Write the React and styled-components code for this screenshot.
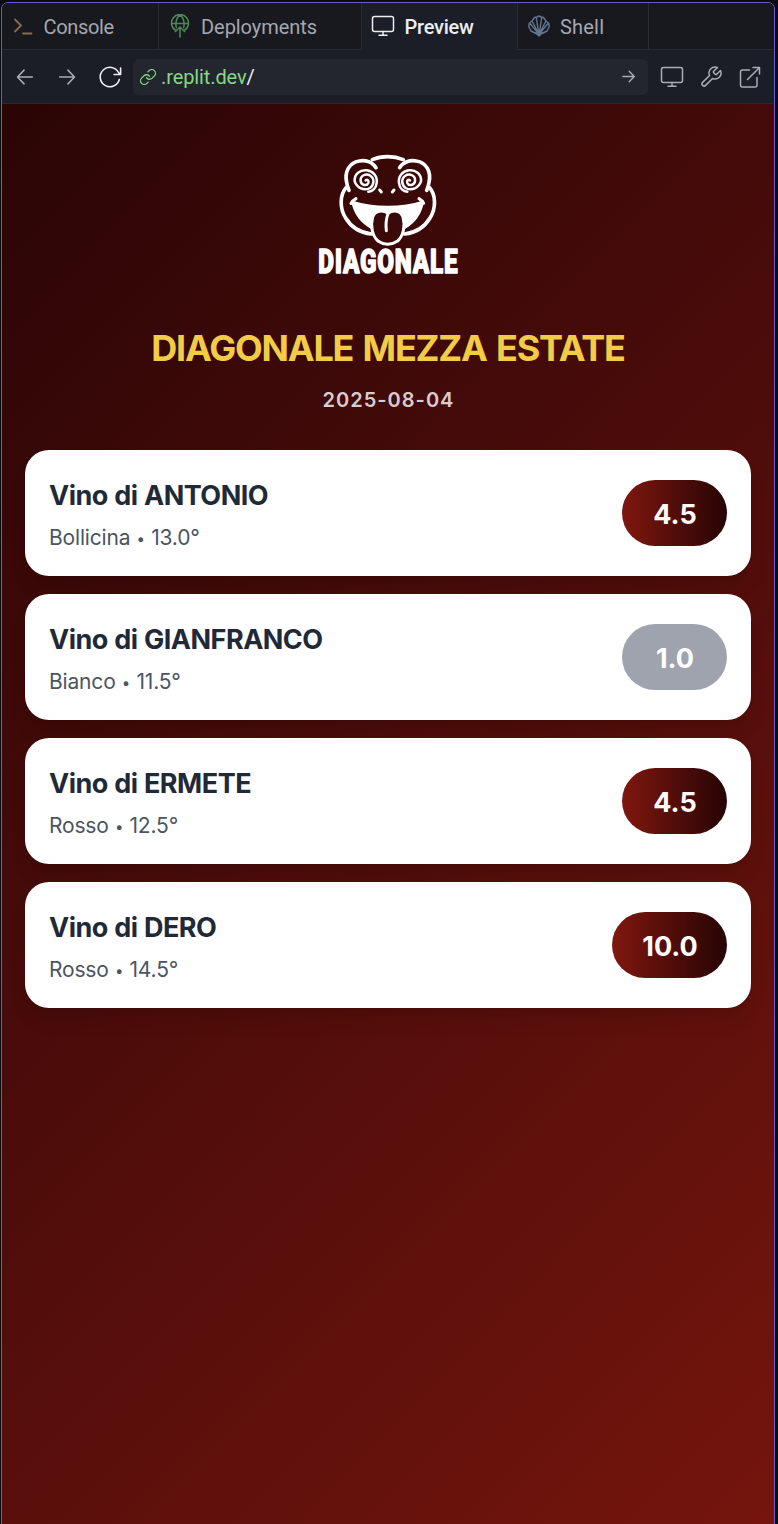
import React from "react";
import styled, { createGlobalStyle } from "styled-components";

const GlobalStyle = createGlobalStyle`
  *, *::before, *::after { box-sizing: border-box; }
  html, body { margin: 0; padding: 0; background: #0b0c12; }
  body { font-family: Inter, "Liberation Sans", sans-serif; }
`;

const Page = styled.div`
  height: 1524px;
  padding: 2px 3px 0 1px;
  overflow: hidden;
  background: #0b0c12;
`;

const Pane = styled.div`
  display: flex;
  flex-direction: column;
  height: 1540px;
  border: 1px solid #6a58d6;
  border-radius: 7px;
  overflow: hidden;
  background: #1b1d25;
`;

const TabBar = styled.div`
  display: flex;
  height: 47px;
  flex: none;
`;

const Tab = styled.div`
  display: flex;
  align-items: center;
  width: ${(p) => p.$width}px;
  padding-left: ${(p) => p.$inset}px;
  gap: ${(p) => p.$gap}px;
  border-right: 1px solid #292b34;
  border-bottom: 1px solid ${(p) => (p.$active ? "#1b1e26" : "#292b34")};
  background: ${(p) => (p.$active ? "#1b1e26" : "#18181f")};
  color: ${(p) => (p.$active ? "#eceef2" : "#a4a8b1")};
  font-family: Roboto, sans-serif;
  font-size: 20px;
  font-weight: ${(p) => (p.$active ? 500 : 400)};
  letter-spacing: ${(p) => p.$track}px;
  white-space: nowrap;

  svg { flex: none; }
`;

const TabLabel = styled.span`
  padding-top: 1px;
`;

const TabFill = styled.div`
  flex: 1;
  border-bottom: 1px solid #292b34;
  background: #18181f;
`;

const Toolbar = styled.div`
  display: flex;
  align-items: center;
  flex: none;
  height: 54px;
  padding: 0 12px;
  border-bottom: 1px solid #292b34;
  background: #1b1e26;
  color: #a9adb5;

  svg { flex: none; }
`;

const NavButtons = styled.div`
  display: flex;
  align-items: center;
  gap: 20px;
  width: 119px;
`;

const AddressBar = styled.div`
  display: flex;
  align-items: center;
  width: 515px;
  height: 36px;
  padding: 0 11px 0 6px;
  border-radius: 6px;
  background: #23262f;
  font-family: Roboto, sans-serif;
  font-size: 20px;
  letter-spacing: -0.1px;
`;

const Host = styled.span`
  margin-left: 4px;
  padding-top: 1px;
  color: #85d783;
`;

const Path = styled.span`
  flex: 1;
  padding-top: 1px;
  color: #eceef2;
`;

const ToolIcons = styled.div`
  display: flex;
  align-items: center;
  justify-content: space-between;
  flex: 1;
  margin-left: 12px;
`;

const Screen = styled.main`
  display: flex;
  flex-direction: column;
  align-items: center;
  height: 1420px;
  flex: none;
  padding: 41px 23px 0;
  background: linear-gradient(135deg, #2a0505 0%, #4a0c0a 45%, #75150d 100%);
`;

const Logo = styled.svg`
  display: block;
  overflow: visible;
  margin-right: 2px;
`;

const Heading = styled.h1`
  margin: 41px 0 0;
  height: 44px;
  font-size: 36px;
  line-height: 44px;
  font-weight: 700;
  letter-spacing: -1.2px;
  word-spacing: 2px;
  color: #f3cc47;
  white-space: nowrap;
`;

const DateLine = styled.p`
  margin: 15px 0 0;
  height: 30px;
  padding-left: 1px;
  font-size: 20px;
  line-height: 30px;
  font-weight: 600;
  letter-spacing: 1px;
  color: #d9cccc;
`;

const WineList = styled.ul`
  display: flex;
  flex-direction: column;
  gap: 18px;
  align-self: stretch;
  margin: 35px 0 0;
  padding: 0;
  list-style: none;
`;

const WineCard = styled.li`
  display: flex;
  align-items: center;
  justify-content: space-between;
  height: 126px;
  padding: 0 24px;
  border-radius: 24px;
  background: #fff;
  box-shadow: 0 15px 22px -5px rgba(0, 0, 0, 0.1), 0 6px 9px -6px rgba(0, 0, 0, 0.1);
`;

const WineInfo = styled.div`
  padding-top: 8px;
`;

const WineName = styled.h2`
  margin: 0;
  font-size: 27px;
  line-height: 42px;
  font-weight: 700;
  letter-spacing: -0.5px;
  word-spacing: 0.5px;
  color: #1f2937;
`;

const WineMeta = styled.p`
  margin: 0;
  font-size: 21px;
  line-height: 42px;
  letter-spacing: -0.17px;
  word-spacing: 0.5px;
  color: #4b5563;
`;

const Dot = styled.span`
  font-size: 15px;
  line-height: 1;
  vertical-align: 1px;
`;

const Score = styled.div`
  display: flex;
  align-items: center;
  justify-content: center;
  width: ${(p) => (p.$wide ? 115 : 105)}px;
  height: 66px;
  padding: 2px 0 0 1px;
  border-radius: 33px;
  background: ${(p) => (p.$muted ? "#9fa3ae" : "linear-gradient(90deg, #80170f, #260404)")};
  color: #fff;
  font-size: 27px;
  font-weight: 700;
`;

const Icon = ({ w = 24, h = 24, box, sw = 1.5, color = "currentColor", children }) => (
  <svg width={w} height={h} viewBox={box || `0 0 ${w} ${h}`} fill="none" stroke={color}
    strokeWidth={sw} strokeLinecap="round" strokeLinejoin="round">{children}</svg>
);

const PromptIcon = () => (
  <Icon w={20} h={18} color="#80704f" sw={1.8}><path d="M2 2.500 8 8.500 2 14.500M10 16.500h8.500" /></Icon>
);

const DeployIcon = () => (
  <Icon w={20} h={24} color="#4f8659" sw={1.5}>
    <path d="M5.500 16.200A8.500 8.500 0 1 1 14.500 16.200M1.600 9.500h16.800M6.300 13.500C5 8 7 3 10 1.200c3 1.800 5 6.800 3.700 12.300M10 23V13M5.500 17.500 10 13l4.500 4.500" />
  </Icon>
);

const MonitorIcon = () => (
  <Icon w={24} h={22}><rect x="1.500" y="1.500" width="21" height="15" rx="2" /><path d="M12 16.500V20M8 20.200h8" /></Icon>
);

const ShellIcon = () => (
  <Icon w={24} h={24} color="#64758f" sw={1.4}>
    <path d="M12 21.500 9 19.500 4 17 1.700 12.500 2.300 9l2.700-2L7.500 3.500 10 3l2-1 2 1 2.500.5L19 7l2.700 2 .6 3.500L20 17l-5 2.500ZM11 19 2.500 9M11.300 19 5 7M11.700 19 9.300 3.500M12.300 19 14.700 3.500M12.700 19 19 7M13 19 21.500 9" />
    <path d="M9 18.500h6L12 22Z" fill="#64758f" />
  </Icon>
);

const ArrowIcon = ({ size, flip }) => (
  <Icon w={size} h={size} box="0 0 24 24" sw={size > 20 ? 1.6 : 1.9}>
    {flip ? <path d="M20 12H4M11 4.500 3.800 12 11 19.500" /> : <path d="M4 12h16M13 4.500 20.200 12 13 19.500" />}
  </Icon>
);

const ReloadIcon = () => (
  <Icon w={24} h={24} color="#eceef2" sw={1.6}>
    <path d="M21.300 14.500A9.700 9.700 0 1 1 20.500 7.500L22 9.200M22.600 3v6.500h-6.500" />
  </Icon>
);

const LinkIcon = () => (
  <Icon w={18} h={18} box="0 0 24 24" color="#85d783" sw={1.7}>
    <path d="M10 13a5 5 0 0 0 7.540.540l3-3a5 5 0 0 0-7.070-7.070l-1.720 1.710M14 11a5 5 0 0 0-7.540-.540l-3 3a5 5 0 0 0 7.070 7.070l1.710-1.710" />
  </Icon>
);

const WrenchIcon = () => (
  <Icon w={24} h={24}>
    <path d="M14.700 6.300a1 1 0 0 0 0 1.400l1.600 1.600a1 1 0 0 0 1.400 0l3.770-3.770a6 6 0 0 1-7.940 7.940l-6.910 6.910a2.120 2.120 0 0 1-3-3l6.910-6.910a6 6 0 0 1 7.940-7.940l-3.760 3.760z" />
  </Icon>
);

const ExternalIcon = () => (
  <Icon w={24} h={24}>
    <path d="M11.500 5H4.500A2 2 0 0 0 2.500 7v13a2 2 0 0 0 2 2h12.500a2 2 0 0 0 2-2v-7.500M15 2.500h6.500V9M21.500 2.500 9.500 14.500" />
  </Icon>
);

const FrogLogo = () => (
  <Logo width="165" height="140" viewBox="0 0 495 420" fill="none" stroke="#fff" strokeLinecap="round" strokeLinejoin="round" role="img" aria-label="Diagonale">
    <g strokeWidth="11">
      <path d="M202 44C230 32 266 32 295 44" />
      <path d="M213 68C202 51 182 44 163 48C132 53 118 81 125 112Q127 126 132 136" />
      <path d="M284 68C294 51 315 44 334 48C365 53 379 81 372 112Q370 126 365 136" />
      <path d="M125 126C103 149 104 191 122 219C138 246 166 263 199 267" />
      <path d="M372 126C394 149 393 191 375 219C359 246 332 263 299 267" />
    </g>
    <path strokeWidth="7.500" d="M182 106C185 101 193 106 190 114C185 125 169 120 167 109C164 91 184 84 196 92C210 101 207 121 195 129C177 139 156 129 149 109C147 86 166 74 185 76C205 78 218 94 215 114C213 131 202 140 190 140" />
    <path strokeWidth="7.500" d="M315 106C312 101 304 106 307 114C312 125 328 120 330 109C333 91 313 84 301 92C287 101 290 121 302 129C320 139 341 129 348 109C350 86 331 74 312 76C292 78 279 94 282 114C284 131 295 140 307 140" />
    <path strokeWidth="9" d="M224 135 229 141M267 135 262 141" />
    <path strokeWidth="9" d="M138 175C141 169 146 165 153 161M356 175C354 169 349 165 342 161" />
    <path fill="#fff" strokeWidth="6" d="M142 170C205 190 291 190 354 170C348 205 327 234 296 251C301 221 293 200 275 199Q258 198 249 204Q240 198 222 199C203 201 198 222 203 251C170 234 148 204 142 170Z" />
    <path fill="#3a0908" strokeWidth="9" d="M249 205C235 194 210 195 203 216C195 244 203 274 219 288Q248 308 278 288C294 274 302 244 294 216C287 195 263 194 249 205Z" />
    <path strokeWidth="9" d="M249 206C243 222 242 239 244 257" />
    <text x="40" y="384" fill="#fff" stroke="#fff" strokeWidth="4" fontFamily="Roboto, sans-serif" fontWeight="900" fontSize="101" letterSpacing="3" textLength="420" lengthAdjust="spacingAndGlyphs">DIAGONALE</text>
  </Logo>
);

const wines = [
  { owner: "ANTONIO", type: "Bollicina", degrees: "13.0°", score: "4.5" },
  { owner: "GIANFRANCO", type: "Bianco", degrees: "11.5°", score: "1.0", muted: true },
  { owner: "ERMETE", type: "Rosso", degrees: "12.5°", score: "4.5" },
  { owner: "DERO", type: "Rosso", degrees: "14.5°", score: "10.0", wide: true },
];

export default function App() {
  return (
    <Page>
      <GlobalStyle />
      <Pane>
        <TabBar>
          <Tab $width={157} $inset={11} $gap={10.5} $track={-0.35}><PromptIcon /><TabLabel>Console</TabLabel></Tab>
          <Tab $width={203} $inset={11} $gap={11} $track={-0.05}><DeployIcon /><TabLabel>Deployments</TabLabel></Tab>
          <Tab $width={156} $inset={9} $gap={9.5} $track={-0.25} $active><MonitorIcon /><TabLabel>Preview</TabLabel></Tab>
          <Tab $width={131} $inset={9} $gap={9} $track={0.2}><ShellIcon /><TabLabel>Shell</TabLabel></Tab>
          <TabFill />
        </TabBar>
        <Toolbar>
          <NavButtons>
            <ArrowIcon size={22} flip />
            <ArrowIcon size={22} />
            <ReloadIcon />
          </NavButtons>
          <AddressBar>
            <LinkIcon />
            <Host>.replit.dev</Host>
            <Path>/</Path>
            <ArrowIcon size={17} />
          </AddressBar>
          <ToolIcons>
            <MonitorIcon />
            <WrenchIcon />
            <ExternalIcon />
          </ToolIcons>
        </Toolbar>
        <Screen>
          <FrogLogo />
          <Heading>DIAGONALE MEZZA ESTATE</Heading>
          <DateLine>2025-08-04</DateLine>
          <WineList>
            {wines.map((w) => (
              <WineCard key={w.owner}>
                <WineInfo>
                  <WineName>Vino di {w.owner}</WineName>
                  <WineMeta>{w.type} <Dot>•</Dot> {w.degrees}</WineMeta>
                </WineInfo>
                <Score $muted={w.muted} $wide={w.wide}>{w.score}</Score>
              </WineCard>
            ))}
          </WineList>
        </Screen>
      </Pane>
    </Page>
  );
}
